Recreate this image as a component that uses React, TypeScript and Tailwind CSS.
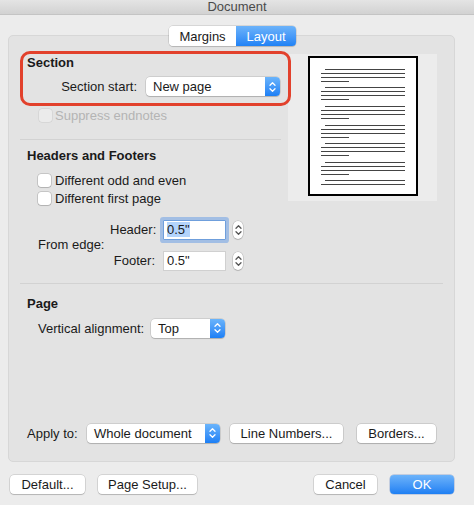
import React from 'react';

const Chevrons = ({ color = 'white' }: { color?: string }) => (
  <svg width="7" height="12" viewBox="0 0 7 12" fill="none" stroke={color} strokeWidth="1.3" strokeLinecap="round" strokeLinejoin="round">
    <path d="M1 4.2 L3.5 1.7 L6 4.2" />
    <path d="M1 7.8 L3.5 10.3 L6 7.8" />
  </svg>
);

const Popup = ({ label, w }: { label: string; w: string }) => (
  <div className={`${w} h-[19px] flex items-stretch bg-white rounded-[4px] shadow-[0_0_0_0.5px_rgba(0,0,0,0.18),0_1px_1px_rgba(0,0,0,0.15)]`}>
    <span className="flex-1 pl-[7px] flex items-center leading-none">{label}</span>
    <span className="w-[15px] rounded-r-[4px] bg-gradient-to-b from-[#6ab4fb] to-[#1b7ff5] flex items-center justify-center">
      <Chevrons />
    </span>
  </div>
);

const Button = ({ label, w, primary = false }: { label: string; w: string; primary?: boolean }) => (
  <button
    className={`${w} h-[19px] rounded-[4px] flex items-center justify-center leading-none ${
      primary
        ? 'bg-gradient-to-b from-[#6cb3fa] to-[#1c7ff3] text-white shadow-[0_0_0_0.5px_rgba(0,60,160,0.35)]'
        : 'bg-white text-[#1a1a1a] shadow-[0_0_0_0.5px_rgba(0,0,0,0.2),0_1px_1px_rgba(0,0,0,0.15)]'
    }`}
  >
    {label}
  </button>
);

const Checkbox = ({ disabled = false }: { disabled?: boolean }) => (
  <span
    className={`w-[13px] h-[13px] rounded-[3px] ${
      disabled
        ? 'bg-[#ebebeb] shadow-[0_0_0_0.5px_rgba(0,0,0,0.1)]'
        : 'bg-white shadow-[0_0_0_0.5px_rgba(0,0,0,0.25),0_1px_1px_rgba(0,0,0,0.1)]'
    }`}
  />
);

const Stepper = () => (
  <span className="w-[10px] h-[18px] rounded-[5px] bg-white shadow-[0_0_0_0.5px_rgba(0,0,0,0.2),0_1px_1px_rgba(0,0,0,0.12)] flex items-center justify-center">
    <Chevrons color="#555" />
  </span>
);

// paragraph blocks of the page preview
const lineGroups = ['h-[18px]', 'h-[19px]', 'h-[19px]', 'h-[18px]', 'h-[19px]', 'h-[18px]', 'h-[18px]'];

export default function App() {
  return (
    <div className="w-[474px] h-[505px] bg-[#ececec] flex flex-col overflow-hidden text-[13px] text-[#1a1a1a] font-['Liberation_Sans',Arial,sans-serif]">
      {/* title bar */}
      <div className="h-[15px] shrink-0 bg-gradient-to-b from-[#e4e4e4] to-[#d2d2d2] border-b border-[#c4c4c4] flex justify-center">
        <span className="-mt-[1px] leading-[15px] text-[#4a4a4a]">Document</span>
      </div>

      {/* tabs */}
      <div className="relative z-10 mt-[11px] h-[20px] flex justify-center pr-[9px]">
        <div className="flex rounded-[4px] shadow-[0_0_0_0.5px_rgba(0,0,0,0.18),0_1px_1px_rgba(0,0,0,0.12)]">
          <span className="w-[67px] bg-white rounded-l-[4px] flex items-center justify-center leading-none">Margins</span>
          <span className="w-[60px] bg-gradient-to-b from-[#6cb3fa] to-[#1f82f5] text-white rounded-r-[4px] flex items-center justify-center leading-none">Layout</span>
        </div>
      </div>

      {/* group box */}
      <div className="relative ml-[8px] w-[447px] -mt-[11px] h-[427px] bg-[#e3e3e3] border border-[#d7d7d7] rounded-[5px] flex flex-col">
        <div className="flex">
          <div className="w-[272px] pl-[18px] pt-[19px] flex flex-col">
            <div className="h-[16px] font-bold leading-[16px]">Section</div>
            <div className="mt-[6px] flex items-center">
              <span className="w-[110px] text-right">Section start:</span>
              <span className="ml-[9px]">
                <Popup label="New page" w="w-[134px]" />
              </span>
            </div>
            <div className="mt-[11px] h-[16px] pl-[12px] flex items-center gap-[3px] text-[#b4b4b4]">
              <Checkbox disabled />
              <span>Suppress endnotes</span>
            </div>
            <div className="mt-[15px] -ml-[7px] h-px bg-[#d2d2d2]" />

            <div className="mt-[8px] h-[16px] font-bold leading-[16px]">Headers and Footers</div>
            <div className="mt-[9px] h-[16px] pl-[11px] flex items-center gap-[4px]">
              <Checkbox />
              <span>Different odd and even</span>
            </div>
            <div className="mt-[2px] h-[16px] pl-[11px] flex items-center gap-[4px]">
              <Checkbox />
              <span>Different first page</span>
            </div>
            <div className="mt-[13px] pl-[11px] flex items-center">
              <span className="w-[72px]">From edge:</span>
              <div className="flex flex-col gap-[11px]">
                <div className="flex items-center">
                  <span className="w-[45px] text-right">Header:</span>
                  <span className="ml-[8px] w-[63px] h-[20px] bg-white border border-[#6f9fdc] shadow-[0_0_0_3px_rgba(110,160,230,0.55)] rounded-[1px] flex items-center pl-[3px]">
                    <span className="bg-[#b3d4fc] leading-[15px]">0.5"</span>
                  </span>
                  <span className="ml-[7px]">
                    <Stepper />
                  </span>
                </div>
                <div className="flex items-center">
                  <span className="w-[45px] text-right">Footer:</span>
                  <span className="ml-[8px] w-[63px] h-[20px] bg-white border border-[#d0d0d0] flex items-center pl-[3px]">0.5"</span>
                  <span className="ml-[7px]">
                    <Stepper />
                  </span>
                </div>
              </div>
            </div>
          </div>

          {/* page preview */}
          <div className="ml-auto mr-[17px] mt-[18px] w-[149px] h-[147px] bg-[#ececec] flex justify-center pt-[2px]">
            <div className="w-[110px] h-[140px] border-2 border-black bg-white flex flex-col pt-[11px] pl-[11px]">
              {lineGroups.map((h, g) => (
                <div key={g} className={`${h} shrink-0 flex flex-col gap-[3px]`}>
                  <div className="ml-[4px] w-[80px] h-px bg-[#444]" />
                  <div className="w-[84px] h-px bg-[#444]" />
                  {g < 6 && <div className="w-[84px] h-px bg-[#444]" />}
                  {g < 6 && <div className="w-[28px] h-px bg-[#444]" />}
                </div>
              ))}
            </div>
          </div>
        </div>

        <div className="mt-[12px] mx-[11px] h-px bg-[#d2d2d2]" />
        <div className="pl-[18px] mt-[12px] h-[16px] font-bold leading-[16px]">Page</div>
        <div className="pl-[29px] mt-[7px] flex items-center">
          <span className="w-[113px]">Vertical alignment:</span>
          <Popup label="Top" w="w-[74px]" />
        </div>

        <div className="mt-auto mb-[18px] pl-[18px] flex items-center">
          <span className="w-[60px]">Apply to:</span>
          <Popup label="Whole document" w="w-[133px]" />
          <span className="ml-[10px]">
            <Button label="Line Numbers..." w="w-[113px]" />
          </span>
          <span className="ml-[14px]">
            <Button label="Borders..." w="w-[79px]" />
          </span>
        </div>

        {/* annotation highlight */}
        <div className="absolute left-[11px] top-[15px] w-[271px] h-[55px] border-[3px] border-[#e2412c] rounded-[10px] pointer-events-none" />
      </div>

      {/* bottom buttons */}
      <div className="mt-[13px] px-[10px] flex items-center">
        <Button label="Default..." w="w-[75px]" />
        <span className="ml-[13px]">
          <Button label="Page Setup..." w="w-[99px]" />
        </span>
        <span className="ml-auto">
          <Button label="Cancel" w="w-[63px]" />
        </span>
        <span className="ml-[13px] mr-[10px]">
          <Button label="OK" w="w-[64px]" primary />
        </span>
      </div>
    </div>
  );
}
